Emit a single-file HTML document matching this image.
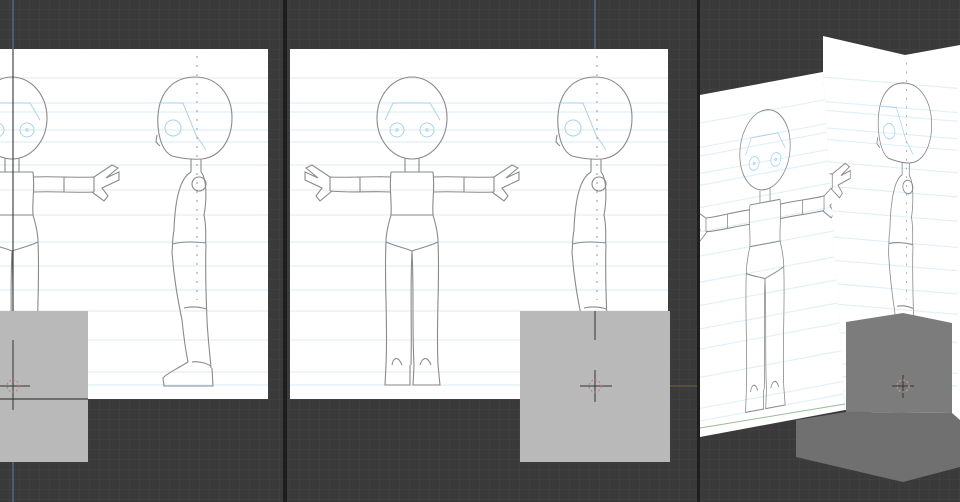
<!DOCTYPE html>
<html><head><meta charset="utf-8"><style>
html,body{margin:0;padding:0;width:960px;height:502px;overflow:hidden;background:#3b3b3b}
svg{display:block}
</style></head><body>
<svg width="960" height="502" viewBox="0 0 960 502" xmlns="http://www.w3.org/2000/svg">
<defs>
<pattern id="grid" width="10" height="10" patternUnits="userSpaceOnUse">
<rect width="10" height="10" fill="#3a3a3a"/>
<path d="M10 0V10M0 10H10" stroke="#444" stroke-width="1"/>
</pattern>
<g id="sheet">
<rect x="290" y="49" width="378" height="350" fill="#fff"/>
<g stroke="#e0f0f8" stroke-width="1.2">
<path d="M290 78H668M290 103H668M290 112H668M290 130H668M290 142H668M290 165H668M290 190H668M290 215H668M290 242H668M290 266H668M290 290H668M290 311H668M290 340H668M290 372H668M290 385H668"/>
</g>
<!-- front figure -->
<g fill="none" stroke="#8a8a8a" stroke-width="1.1">
<ellipse cx="412" cy="118" rx="35" ry="41"/>
<path d="M405 159V172M419 159V172M391 172H433"/>
<path d="M391 172C389 190 392 200 391 215C388 225 386 235 386 242M433 172C435 190 432 200 433 215C436 225 438 235 438 242M391 215H433M386 242C395 246 405 248 412 251C420 248 430 246 438 242"/>
<path d="M391 177C370 176 350 178 330 177M391 192C370 191 350 193 330 191M360 177V192M330 177V191"/>
<path d="M433 177C454 176 474 178 494 177M433 192C454 191 474 193 494 192M464 177V192M494 177V192"/>
<path d="M330 177L312 165L306 168L318 178L305 172L305 180L322 188L316 196L320 201L332 191"/>
<path d="M494 177L512 165L518 168L506 178L519 172L519 180L502 188L508 196L504 201L492 192"/>
<path d="M386 242C384 280 388 320 386 365M412 251C410 290 412 330 411 365M412 251C414 290 412 330 414 365M438 242C440 280 436 320 438 365"/>
<path d="M386 365L385 385H410L410 365M414 365L413 385H440L438 365M392 365C393 358 398 355 402 365M420 365C422 358 427 355 431 365"/>
</g>
<g fill="none" stroke="#a9d3ec" stroke-width="1">
<path d="M385 120L393 103H430L440 120"/>
<circle cx="397" cy="130" r="7"/><circle cx="427" cy="130" r="7"/>
<circle cx="397" cy="130" r="1.2"/><circle cx="427" cy="130" r="1.2"/>
</g>
<!-- side figure -->
<g fill="none" stroke="#8a8a8a" stroke-width="1.1">
<path d="M572 156C560 150 557 130 558 115C560 90 575 77 595 77C618 77 632 95 632 118C632 140 620 157 602 159C590 160 580 158 572 156M557 135L556 142L560 146"/>
<path d="M591 159V172M601 159V172"/>
<path d="M591 172C580 178 575 200 574 230C572 240 573 245 572 252M601 172C608 180 606 205 604 215C607 228 605 240 606 245M572 244C585 241 596 242 606 243"/>
<path d="M572 252C574 280 578 300 582 320C584 340 586 352 588 362M606 245C605 270 606 295 607 320C608 340 610 355 611 368M584 308C592 306 600 307 607 309"/>
<path d="M588 362C575 370 566 374 563 378L564 386H613L612 368M592 362C598 361 606 363 611 366"/>
<circle cx="599" cy="184" r="7"/>
</g>
<g fill="none" stroke="#a9d3ec" stroke-width="1"><path d="M558 103H583L596 135L606 150"/><circle cx="573" cy="128" r="8"/></g>
<path d="M597 56V300" stroke="#999" stroke-width="1" stroke-dasharray="2 7"/>
</g>
<clipPath id="cl"><rect x="0" y="0" width="283" height="502"/></clipPath>
<clipPath id="cfront"><polygon points="700,95 823,72 845,410 700,437"/></clipPath>
<clipPath id="cback"><polygon points="823,36 905,55 960,45 960,420 845,410 823,72"/></clipPath>
</defs>
<rect width="960" height="502" fill="url(#grid)"/>

<!-- left viewport -->
<g clip-path="url(#cl)">
<g transform="translate(-400,0)"><use href="#sheet"/></g>
<path d="M13 0V49M13 462V502" stroke="#4d6a86" stroke-width="1.5"/>
<path d="M13 49V311" stroke="#222" stroke-width="1"/>
<rect x="0" y="311" width="88" height="151" fill="#b9b9b9"/>
<path d="M0 399H88" stroke="#222" stroke-width="1"/>
<path d="M13 340V410M0 386H30" stroke="#333" stroke-width="1"/>
<circle cx="13" cy="386" r="6" fill="none" stroke="#c77" stroke-dasharray="2 2"/>
</g>
<rect x="283" y="0" width="4" height="502" fill="#1e1e1e"/>

<!-- middle viewport -->
<use href="#sheet"/>
<path d="M595 0V49" stroke="#4d6a86" stroke-width="1.5"/>
<path d="M668 386H697" stroke="#6a6a3a" stroke-width="1"/>
<rect x="520" y="311" width="150" height="151" fill="#b9b9b9"/>
<path d="M595 311V340M595 370V402M580 386H612" stroke="#333" stroke-width="1"/>
<circle cx="595" cy="386" r="6" fill="none" stroke="#c77" stroke-dasharray="2 2"/>
<rect x="697" y="0" width="3" height="502" fill="#1e1e1e"/>

<!-- right viewport -->
<polygon points="823,36 905,55 960,45 960,420 845,410 823,72" fill="#fff"/>
<g clip-path="url(#cback)">
<g transform="translate(905,83) matrix(0.72,0.06,0,0.97,0,0) translate(-595,-77)">
<use href="#sheet"/>
</g>
</g>
<polygon points="700,95 823,72 845,410 700,437" fill="#fff"/>
<g clip-path="url(#cfront)">
<g transform="translate(765,110) matrix(0.72,-0.135,0,0.97,0,0) translate(-412,-77)">
<use href="#sheet"/>
</g>
</g>
<path d="M700 428L845 404" stroke="#9b9" stroke-width="1"/>
<polygon points="796,420 846,412 952,413 960,420 960,467 903,482 796,457" fill="#707070"/>
<polygon points="846,322 903,313 952,323 952,413 846,412" fill="#7c7c7c"/>
<path d="M903 375V398M892 386H914" stroke="#333" stroke-width="1"/>
<circle cx="903" cy="386" r="6" fill="none" stroke="#d99" stroke-dasharray="2 2"/>
</svg>
</body></html>
